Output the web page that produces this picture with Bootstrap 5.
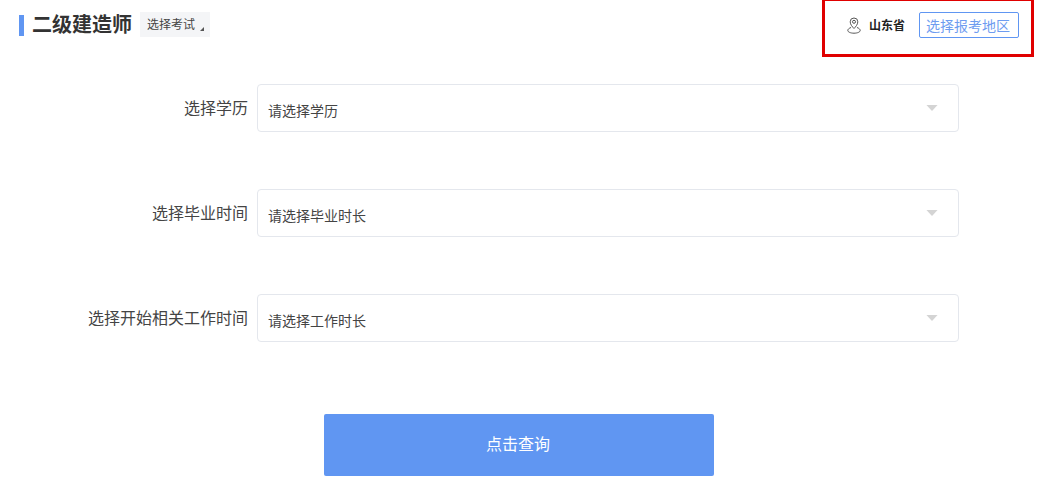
<!DOCTYPE html>
<html lang="zh">
<head>
<meta charset="utf-8">
<title>二级建造师</title>
<link href="https://cdn.jsdelivr.net/npm/bootstrap@5.3.0/dist/css/bootstrap.min.css" rel="stylesheet">
<style>
html,body{height:488px;overflow:hidden;background:#fff;}
body{font-family:"Noto Sans CJK SC","Liberation Sans",sans-serif;color:#333;}
.top-bar{height:57px;padding-left:19px;padding-right:11px;}
.title-mark{width:5px;height:21px;background:#6096f2;margin-top:15px;}
.exam-title{font-size:20px;font-weight:700;line-height:28px;color:#333;margin:10px 0 0 8px;}
.exam-pick{position:relative;font-size:12px;line-height:24px;height:25px;background:#f4f5f7;color:#444;padding:0 15px 0 7px;margin:12px 0 0 8px;}
.exam-pick::after{content:"";position:absolute;right:6px;bottom:6px;border-style:solid;border-width:0 0 4px 4px;border-color:transparent transparent #555 transparent;}
.region-box{width:212px;height:59px;margin-top:-2px;border:3px solid #e00000;padding:0 12px 5px 22px;}
.region-name{font-size:12px;font-weight:700;color:#222;margin-left:8px;}
.region-btn{font-size:14px;line-height:24px;height:26px;width:100px;border:1px solid #6096f2;border-radius:2px;background:#fff;color:#6e9cf0;padding:0 2px 0 0;margin-left:14px;}
.form-area{padding-top:27px;}
.field-line{height:48px;margin-bottom:57px;}
.field-label{width:248px;font-size:16px;line-height:48px;color:#444;text-align:right;margin-top:-1px;flex:none;}
.field-select{width:702px;height:48px;margin-left:9px;border:1px solid #e4e7ed;border-radius:4px;font-size:14px;color:#444;padding:4px 30px 0 10px;box-shadow:none;background-position:right 20px center;background-size:12px 6px;background-repeat:no-repeat;background-image:url("data:image/svg+xml,%3Csvg xmlns='http://www.w3.org/2000/svg' viewBox='0 0 13 7'%3E%3Cpath d='M0 0h13L6.500 7z' fill='%23d4d4d4'/%3E%3C/svg%3E");}
.query-wrap{padding-top:15px;padding-left:324px;}
.query-btn{width:390px;height:62px;background:#6096f2;border:0;border-radius:2px;color:#fff;font-size:16px;padding:0 2px 4px 0;}
</style>
</head>
<body>
<div class="top-bar d-flex justify-content-between align-items-start">
  <div class="d-flex align-items-start">
    <div class="title-mark"></div>
    <div class="exam-title">二级建造师</div>
    <div class="exam-pick">选择考试</div>
  </div>
  <div class="region-box d-flex align-items-center">
    <svg width="14" height="17" viewBox="0 0 14 17" fill="none" stroke="#555" stroke-width="1"><path d="M7 1a3.800 3.800 0 0 1 3.800 3.800C10.800 7.500 8.500 10 7 11.500 5.500 10 3.200 7.500 3.200 4.800A3.800 3.800 0 0 1 7 1z"/><circle cx="7" cy="4.800" r="1.500"/><path d="M4 10.500C2 11.200.8 12.300.8 13.500c0 1.500 2.800 2.700 6.200 2.700s6.200-1.200 6.200-2.700c0-1.200-1.200-2.300-3.200-3"/></svg>
    <span class="region-name">山东省</span>
    <button type="button" class="btn region-btn">选择报考地区</button>
  </div>
</div>
<div class="form-area">
  <div class="field-line d-flex">
    <label class="field-label">选择学历</label>
    <select class="form-select field-select"><option>请选择学历</option></select>
  </div>
  <div class="field-line d-flex">
    <label class="field-label">选择毕业时间</label>
    <select class="form-select field-select"><option>请选择毕业时长</option></select>
  </div>
  <div class="field-line d-flex">
    <label class="field-label">选择开始相关工作时间</label>
    <select class="form-select field-select"><option>请选择工作时长</option></select>
  </div>
</div>
<div class="query-wrap">
  <button type="button" class="btn query-btn">点击查询</button>
</div>
<script src="https://cdn.jsdelivr.net/npm/bootstrap@5.3.0/dist/js/bootstrap.bundle.min.js"></script>
</body>
</html>
